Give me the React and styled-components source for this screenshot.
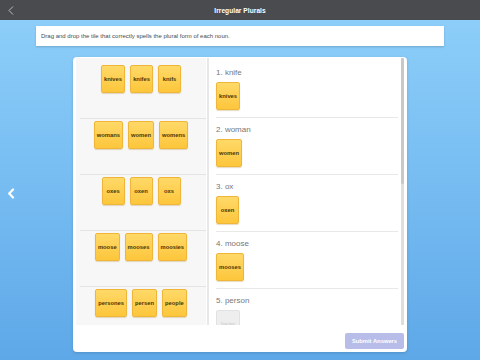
import React from "react";
import styled, { createGlobalStyle } from "styled-components";

const GlobalStyle = createGlobalStyle`
  html, body {
    margin: 0;
    padding: 0;
  }
  body {
    font-family: "Liberation Sans", Arial, sans-serif;
  }
  * {
    box-sizing: border-box;
  }
`;

const Page = styled.div`
  width: 480px;
  height: 360px;
  display: flex;
  flex-direction: column;
  overflow: hidden;
  background: linear-gradient(180deg, #8fd0fa 0%, #77bdf2 50%, #5ea8e8 100%);
`;

const Header = styled.header`
  height: 20px;
  flex-shrink: 0;
  display: grid;
  grid-template-columns: 24px 1fr 24px;
  align-items: center;
  background: #4a4b4f;
`;

const BackButton = styled.div`
  display: flex;
  align-items: center;
  padding-left: 8px;
  height: 100%;
`;

const Title = styled.h1`
  margin: 0;
  text-align: center;
  color: #ffffff;
  font-size: 6.6px;
  font-weight: bold;
  letter-spacing: 0.05px;
`;

const Main = styled.main`
  position: relative;
  flex: 1;
  display: flex;
  flex-direction: column;
  align-items: center;
  padding-top: 6px;
`;

const SideArrow = styled.div`
  position: absolute;
  left: 7px;
  top: 165px;
`;

const Instructions = styled.div`
  width: 408px;
  height: 20px;
  display: flex;
  align-items: center;
  padding-left: 5px;
  background: #ffffff;
  box-shadow: 0 1px 2px rgba(0, 0, 0, 0.18);
  color: #4a4a4a;
  font-size: 6px;
`;

const Card = styled.section`
  width: 334px;
  height: 295px;
  margin-top: 11px;
  display: flex;
  flex-direction: column;
  padding: 1px 3px 0 3px;
  background: #ffffff;
  border-radius: 4px;
  box-shadow: 0 1px 3px rgba(0, 0, 0, 0.15);
`;

const Board = styled.div`
  height: 267px;
  display: flex;
`;

const Bank = styled.div`
  width: 130px;
  height: 100%;
  padding-top: 5px;
  background: #f7f7f7;
  overflow: hidden;
`;

const BankRow = styled.div`
  height: ${(p) => (p.$first ? 55 : 56)}px;
  margin: 0 0 0 4px;
  padding-top: 2px;
  padding-right: 4px;
  display: flex;
  justify-content: center;
  align-items: flex-start;
  gap: 5px;
  border-top: ${(p) => (p.$first ? "none" : "1px solid #e4e4e4")};
`;

const Tile = styled.div`
  min-width: 23px;
  height: 28px;
  padding: 0 2px;
  display: flex;
  align-items: center;
  justify-content: center;
  border: 1px solid #efb63a;
  border-radius: 2px;
  background: linear-gradient(180deg, #ffd968 0%, #fdc63c 100%);
  box-shadow: 0 1px 1px rgba(160, 110, 0, 0.25);
  color: #4b3608;
  font-size: 5.8px;
  font-weight: bold;
  white-space: nowrap;
`;

const DropZone = styled.div`
  width: 24px;
  height: 28px;
  display: flex;
  align-items: center;
  justify-content: center;
  border: 1px solid #e2e2e2;
  border-radius: 2px;
  background: #eeeeee;
  color: #c4c4c4;
  font-size: 3.2px;
`;

const AnswerPane = styled.div`
  flex: 1;
  display: flex;
  margin-left: 1px;
  border-left: 2px solid #e8e8e8;
  overflow: hidden;
`;

const AnswerList = styled.div`
  flex: 1;
  padding: 3px 3px 0 7px;
  overflow: hidden;
`;

const AnswerItem = styled.div`
  padding: 7px 0 7px;
  border-bottom: 1px solid #e8e8e8;
  display: flex;
  flex-direction: column;
  align-items: flex-start;
  gap: 4px;
`;

const Prompt = styled.div`
  height: 10px;
  line-height: 10px;
  color: #787878;
  font-size: 8px;
`;

const ScrollTrack = styled.div`
  width: 3px;
  height: 100%;
  background: #dedede;
  display: flex;
  flex-direction: column;
`;

const ScrollThumb = styled.div`
  height: 126px;
  background: #c8c8c8;
  border-radius: 2px;
`;

const Footer = styled.div`
  flex: 1;
  display: flex;
  justify-content: flex-end;
  align-items: flex-start;
  padding-top: 8px;
`;

const SubmitButton = styled.button`
  width: 59px;
  height: 16px;
  padding: 0;
  border: none;
  border-radius: 2px;
  background: #b8bce8;
  color: #ffffff;
  font-family: inherit;
  font-size: 5.8px;
  font-weight: bold;
`;

const bankRows = [
  ["knives", "knifes", "knifs"],
  ["womans", "women", "womens"],
  ["oxes", "oxen", "oxs"],
  ["moose", "mooses", "moosies"],
  ["persones", "persen", "people"],
];

const answers = [
  { prompt: "1. knife", tile: "knives" },
  { prompt: "2. woman", tile: "women" },
  { prompt: "3. ox", tile: "oxen" },
  { prompt: "4. moose", tile: "mooses" },
  { prompt: "5. person", tile: null },
];

const App = () => (
  <>
    <GlobalStyle />
    <Page>
      <Header>
        <BackButton>
          <svg width="6" height="9" viewBox="0 0 6 9">
            <polyline
              points="5,0.5 1,4.5 5,8.5"
              fill="none"
              stroke="#c9c9cc"
              strokeWidth="0.9"
            />
          </svg>
        </BackButton>
        <Title>Irregular Plurals</Title>
        <span />
      </Header>
      <Main>
        <SideArrow>
          <svg width="8" height="11" viewBox="0 0 8 11">
            <polyline
              points="6,1.5 2.2,5.5 6,9.5"
              fill="none"
              stroke="#ffffff"
              strokeWidth="2.2"
              strokeLinecap="round"
              strokeLinejoin="round"
            />
          </svg>
        </SideArrow>
        <Instructions>
          Drag and drop the tile that correctly spells the plural form of each noun.
        </Instructions>
        <Card>
          <Board>
            <Bank>
              {bankRows.map((row, i) => (
                <BankRow key={i} $first={i === 0}>
                  {row.map((word) => (
                    <Tile key={word}>{word}</Tile>
                  ))}
                </BankRow>
              ))}
            </Bank>
            <AnswerPane>
              <AnswerList>
                {answers.map((a) => (
                  <AnswerItem key={a.prompt}>
                    <Prompt>{a.prompt}</Prompt>
                    {a.tile ? <Tile>{a.tile}</Tile> : <DropZone>Drop here</DropZone>}
                  </AnswerItem>
                ))}
              </AnswerList>
              <ScrollTrack>
                <ScrollThumb />
              </ScrollTrack>
            </AnswerPane>
          </Board>
          <Footer>
            <SubmitButton>Submit Answers</SubmitButton>
          </Footer>
        </Card>
      </Main>
    </Page>
  </>
);

export default App;
